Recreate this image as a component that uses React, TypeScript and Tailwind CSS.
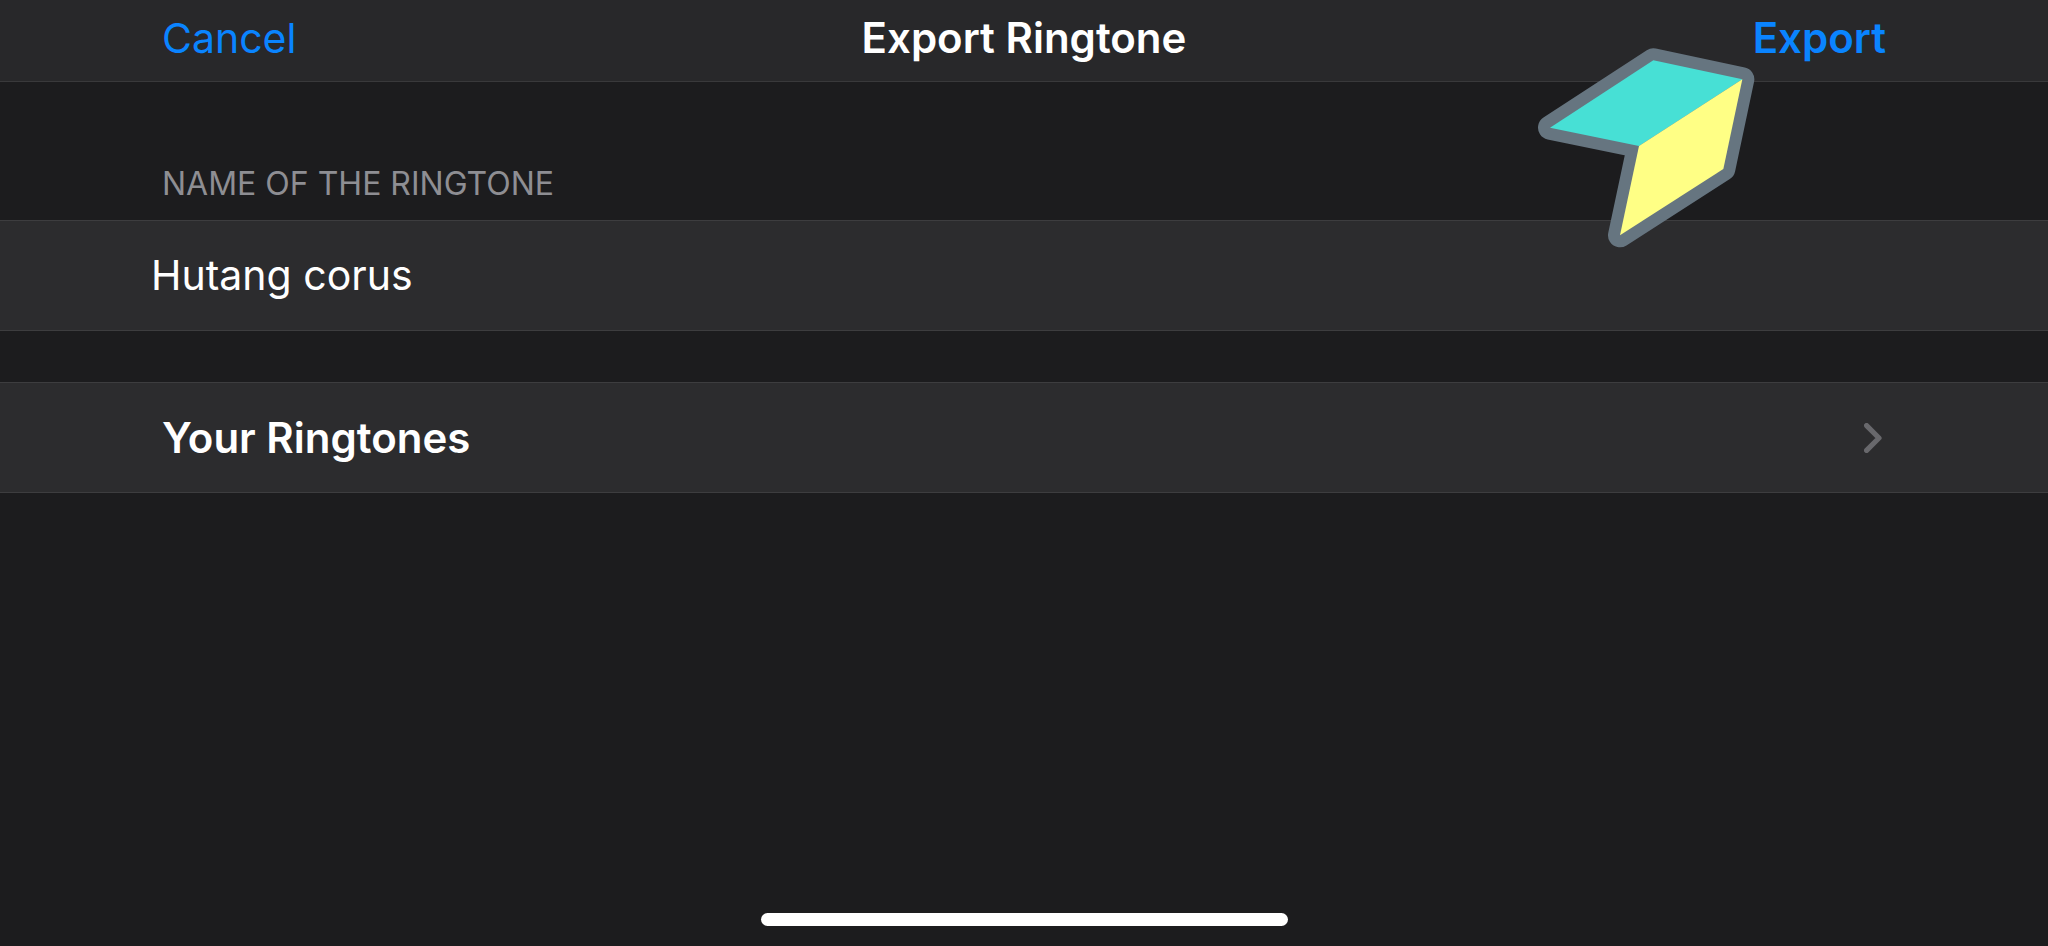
import React, { useState } from 'react';

const PointerArrow: React.FC = () => (
  <svg
    className="pointer-events-none absolute top-12 right-[292px] h-[200px] w-[220px]"
    viewBox="48 144 660 600"
    aria-hidden="true"
  >
    <path
      d="M400 181 L667 238 L610 507 L300 706 L357 438 L90 383 Z"
      fill="#667580"
      stroke="#667580"
      strokeWidth="72"
      strokeLinejoin="round"
    />
    <path d="M400 181 L667 238 L357 438 L90 383 Z" fill="#47e0d5" />
    <path d="M667 238 L610 507 L300 706 L357 438 Z" fill="#ffff85" />
  </svg>
);

const Chevron: React.FC = () => (
  <svg className="h-[30px] w-[18px]" viewBox="0 0 18 30" fill="none" aria-hidden="true">
    <path d="M2.6 2.6 L15 15 L2.6 27.4" stroke="#68686c" strokeWidth="5.2" strokeLinecap="round" strokeLinejoin="round" />
  </svg>
);

const App: React.FC = () => {
  const [name, setName] = useState('Hutang corus');

  return (
    <div className="relative flex min-h-screen flex-col bg-[#1c1c1e] font-[Inter,sans-serif] text-[42px] leading-[52px] text-white">
      {/* Navigation bar */}
      <header className="grid grid-cols-[1fr_auto_1fr] border-b border-[#39393b] bg-[#28282a] px-[162px] pt-3 pb-[17px]">
        <button type="button" className="justify-self-start text-[41px] text-[#0a84ff]">
          Cancel
        </button>
        <h1 className="font-semibold">Export Ringtone</h1>
        <button type="button" className="justify-self-end font-semibold text-[#0a84ff]">
          Export
        </button>
      </header>

      <main className="flex-1">
        <label htmlFor="ringtone-name" className="block px-[162px] pt-[81px] pb-[15px] text-[32px] leading-[42px] text-[#8e8e93]">
          NAME OF THE RINGTONE
        </label>
        <input
          id="ringtone-name"
          type="text"
          value={name}
          onChange={(e) => setName(e.target.value)}
          className="block w-full border-y border-[#3d3d3f] bg-[#2c2c2e] px-[151px] pt-7 pb-[29px] text-[41px] outline-none"
        />

        <button
          type="button"
          className="mt-[51px] flex w-full items-center justify-between border-y border-[#3d3d3f] bg-[#2c2c2e] pt-[29px] pr-[166px] pb-7 pl-[162px] font-semibold"
        >
          Your Ringtones
          <Chevron />
        </button>
      </main>

      {/* Home indicator */}
      <footer className="flex justify-center pb-5">
        <div className="h-[13px] w-[527px] rounded-full bg-white" />
      </footer>

      <PointerArrow />
    </div>
  );
};

export default App;
